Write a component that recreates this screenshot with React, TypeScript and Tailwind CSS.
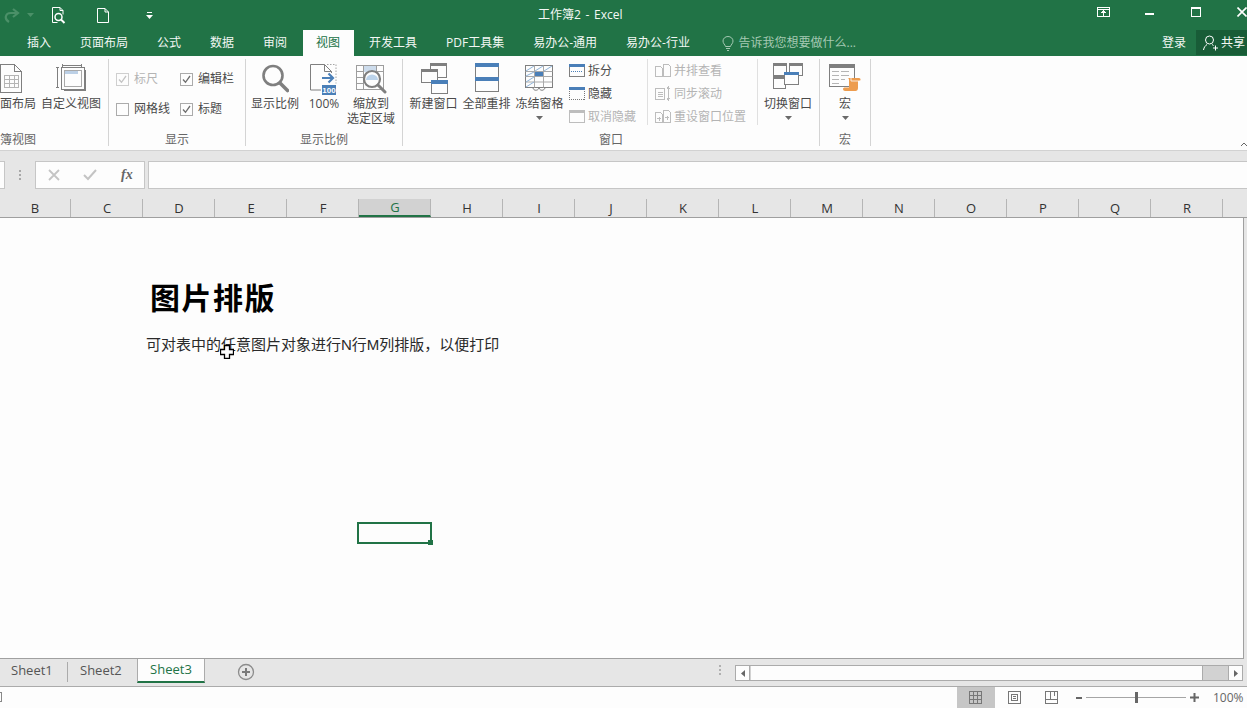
import React from "react";

const G = "#7f7f7f";
const B = "#4a7fb8";
const D = "#bdbdbd";

const Svg = ({ w, h, children, className = "" }: { w: number; h: number; children: React.ReactNode; className?: string }) => (
  <svg width={w} height={h} viewBox={`0 0 ${w} ${h}`} fill="none" className={className} shapeRendering="crispEdges">
    {children}
  </svg>
);

const Caret = () => (
  <svg width="7" height="4" viewBox="0 0 7 4" className="mt-[5px]"><path d="M0 0h7L3.5 4z" fill="#6a6a6a" /></svg>
);

const PageIcon = () => (
  <Svg w={24} h={30} className="-translate-x-[7px]">
    <path d="M1.5.5h14l7 7v21h-21z" fill="#fdfdfd" stroke={G} />
    <path d="M15.5.5v7h7" stroke={G} />
    <path d="M5 11.5h14M5 15.5h14M5 19.5h14M5 23.5h14M5 11v13M10 11v13M15 11v13M19 11v13" stroke="#b5b5b5" />
  </Svg>
);
const CustomViewIcon = () => (
  <Svg w={30} h={28}>
    <path d="M1.5 3v20M0 3h3M0 23h3M6 1.5h19M6 0v3M25 0v3" stroke={G} />
    <rect x="5.5" y="3.5" width="23" height="22" stroke={G} />
    <path d="M8 26.5h21V6" stroke={G} />
    <rect x="8.5" y="6.5" width="17" height="16" stroke="#a9a9a9" fill="#fdfdfd" />
    <rect x="9" y="7" width="13" height="3" fill="#bcd0e6" />
  </Svg>
);
const MagIcon = () => (
  <svg width="28" height="29" viewBox="0 0 28 29" fill="none">
    <circle cx="12" cy="11.5" r="9.5" stroke={G} strokeWidth="2.6" />
    <path d="M19 19l7.500 7.500" stroke={G} strokeWidth="3.600" strokeLinecap="round" />
  </svg>
);
const Pct100Icon = () => (
  <svg width="28" height="32" viewBox="0 0 28 32" fill="none">
    <path d="M.5 26V.5h14l7 7V9" stroke={G} />
    <path d="M14.500.5v7h7M.5 26H11" stroke={G} />
    <path d="M17 .5h9v19" stroke="#a5a5a5" strokeDasharray="1.5 1.5" />
    <path d="M12 14h11M18.500 9.500l4.500 4.500-4.500 4.500" stroke={B} strokeWidth="2.200" />
    <rect x="12" y="21" width="14" height="10" fill={B} />
    <text x="19" y="29" textAnchor="middle" fontSize="8" fontWeight="700" fill="#fff" fontFamily="Liberation Sans">100</text>
  </svg>
);
const ZoomSelIcon = () => (
  <svg width="31" height="29" viewBox="0 0 31 29" fill="none">
    <path d="M.5.500h27v24H.5zM.5 6.500h27M.5 12.500h8M.5 18.500h6M7.500.5v24M20.500.5v6" stroke="#9d9d9d" shapeRendering="crispEdges" />
    <rect x="8" y="1" width="12" height="6" fill="#cddcec" />
    <circle cx="16" cy="14" r="8" fill="#fdfdfd" stroke={G} strokeWidth="2.200" />
    <path d="M10 15a6 5.500 0 0 1 12 0z" fill="#bcd3ea" />
    <path d="M22 20l7 7" stroke={G} strokeWidth="3" strokeLinecap="round" />
  </svg>
);
const NewWinIcon = () => (
  <Svg w={28} h={31}>
    <rect x="10.5" y=".5" width="16" height="14" fill="#fdfdfd" stroke={G} />
    <rect x="10" y="0" width="17" height="3" fill={G} />
    <rect x="1.5" y="6.5" width="16" height="13" fill="#fdfdfd" stroke={G} />
    <rect x="1" y="6" width="17" height="3" fill={G} />
    <rect x="11.5" y="17.5" width="16" height="13" fill="#fdfdfd" stroke={G} />
    <rect x="11" y="17" width="17" height="4" fill={B} />
  </Svg>
);
const ArrangeIcon = () => (
  <Svg w={24} h={29}>
    <rect x=".5" y=".5" width="23" height="28" stroke={G} fill="#fdfdfd" />
    <rect x="0" y="0" width="24" height="4" fill={B} />
    <rect x="0" y="14" width="24" height="4" fill={B} />
  </Svg>
);
const FreezeIcon = () => (
  <svg width="29" height="26" viewBox="0 0 29 26" fill="none">
    <rect x=".5" y=".5" width="27" height="22" stroke={G} fill="#fdfdfd" />
    <path d="M.5 6.500h27M.5 11.500h27M.5 17h27M9.500.5v22M18.500.5v22" stroke="#a9a9a9" />
    <path d="M1 6l8-5M1 11l8-4M1 17l8-5M1 22l8-5M10 6l8-5M19 6l8-5" stroke="#8fb4d9" />
    <rect x="10" y="7" width="8" height="4" fill={B} />
    <path d="M8 23c.5 3 5 3 6 0M14 23c1 3 5 3 6 0" stroke={G} />
  </svg>
);
const SplitIcon = () => (
  <Svg w={16} h={13}>
    <rect x=".5" y=".5" width="15" height="12" stroke={G} fill="#fdfdfd" />
    <rect x="0" y="0" width="16" height="3" fill={B} />
    <path d="M2 7.500h12" stroke={B} strokeDasharray="1 1" />
  </Svg>
);
const HideIcon = () => (
  <Svg w={16} h={13}>
    <rect x=".5" y=".5" width="15" height="12" stroke="#777" strokeDasharray="1 1" fill="#fdfdfd" />
    <rect x="0" y="0" width="16" height="3" fill={B} />
  </Svg>
);
const UnhideIcon = () => (
  <Svg w={16} h={13}>
    <rect x=".5" y=".5" width="15" height="12" stroke={D} fill="#fdfdfd" />
    <rect x="0" y="0" width="16" height="3" fill={D} />
  </Svg>
);
const SideIcon = () => (
  <Svg w={16} h={13}>
    <path d="M.5 2.500h5l2 2v8h-7zM8.500.5h5l2 2v10h-7z" stroke={D} fill="#fdfdfd" />
  </Svg>
);
const SyncIcon = () => (
  <Svg w={16} h={15}>
    <path d="M.5 2.500h9v11h-9z" stroke={D} fill="#fdfdfd" />
    <path d="M2.500 6.500h5M2.500 8.500h5M2.500 10.500h5M13.500 1v13M12 3l1.500-2L15 3M12 12l1.500 2 1.500-2" stroke={D} />
  </Svg>
);
const ResetIcon = () => (
  <Svg w={16} h={13}>
    <path d="M.5 2.500h5l2 2v8h-7zM8.500.5h5l2 2v10h-7z" stroke={D} fill="#fdfdfd" />
    <path d="M2 8.500h4M4 6.500v4M10 7.500h4M12 5.500v4" stroke={D} />
  </Svg>
);
const SwitchIcon = () => (
  <Svg w={30} h={26}>
    <rect x=".5" y=".5" width="13" height="12" stroke={G} fill="#fdfdfd" />
    <rect x="0" y="0" width="14" height="3" fill={G} />
    <rect x="16.5" y=".5" width="13" height="12" stroke={G} fill="#fdfdfd" />
    <rect x="16" y="0" width="14" height="3" fill={G} />
    <rect x=".5" y="13.5" width="12" height="12" stroke={G} fill="#fdfdfd" />
    <rect x="0" y="13" width="13" height="3" fill={G} />
    <rect x="11.5" y="9.5" width="14" height="12" stroke={G} fill="#fdfdfd" />
    <rect x="11" y="9" width="15" height="3" fill={B} />
  </Svg>
);
const MacroIcon = () => (
  <svg width="32" height="28" viewBox="0 0 32 28" fill="none">
    <rect x=".5" y=".5" width="25" height="22" stroke={G} fill="#fdfdfd" shapeRendering="crispEdges" />
    <rect x="0" y="0" width="26" height="4" fill={G} />
    <path d="M3 7.500h7M12 7.500h8M3 11.500h7M12 11.500h8M3 15.500h7M12 15.500h4M3 19.500h7" stroke="#b5b5b5" shapeRendering="crispEdges" />
    <path d="M19 14h11c1 0 1.500.8 1.500 1.500S31 17 30 17h-1v7c0 2-1 3-2.500 3H16c-1 0-2-1-2-2s1-1.500 2-1.500h4V16c0-1-.5-2-1-2z" fill="#ed9c4e" />
    <path d="M22 14v3h9" stroke="#fdfdfd" strokeWidth=".8" />
  </svg>
);

const Large = ({ w, lines, icon, caret, top = 5 }: { w: string; lines: string[]; icon: React.ReactNode; caret?: boolean; top?: number }) => (
  <div className={`${w} shrink-0 flex flex-col items-center`}>
    <div className="h-[37px] flex items-start justify-center" style={{ paddingTop: top }}>{icon}</div>
    {lines.map((l) => (
      <div key={l} className="leading-[15px] whitespace-nowrap">{l}</div>
    ))}
    {caret && <Caret />}
  </div>
);

const Small = ({ icon, label, off }: { icon: React.ReactNode; label: string; off?: boolean }) => (
  <div className={`h-[23px] flex items-center gap-[3px] whitespace-nowrap ${off ? "text-[#b4b4b4]" : ""}`}>
    <div className="w-[16px] flex justify-center">{icon}</div>
    <span>{label}</span>
  </div>
);

const Check = ({ label, checked, off }: { label: string; checked?: boolean; off?: boolean }) => (
  <div className={`h-[30px] flex items-center gap-[5px] ${off ? "text-[#b4b4b4]" : ""}`}>
    <div className={`w-[13px] h-[13px] border flex items-center justify-center bg-[#fdfdfd] ${off ? "border-[#cfcfcf]" : "border-[#ababab]"}`}>
      {checked && (
        <svg width="9" height="9" viewBox="0 0 9 9" fill="none">
          <path d="M1 4.500l2.500 2.800L8 1" stroke={off ? "#c4c4c4" : "#6d6d6d"} strokeWidth="1.300" />
        </svg>
      )}
    </div>
    <span>{label}</span>
  </div>
);

const Group = ({ w, label, children, start }: { w: string; label: string; children: React.ReactNode; start?: boolean }) => (
  <div className={`${w} h-[87px] shrink-0 border-r border-[#d4d4d4] flex flex-col`}>
    <div className="h-[71px] flex">{children}</div>
    <div className={`h-[16px] leading-[20px] whitespace-nowrap text-[#666] ${start ? "text-left" : "text-center"}`}>{label}</div>
  </div>
);

const Tab = ({ children, active }: { children: string; active?: boolean }) => (
  <div className={`h-[26px] px-[14.5px] flex items-center whitespace-nowrap ${active ? "!px-[13.5px] mx-[1px] bg-[#fdfdfd] text-[#217346]" : "text-[#f2f7f4]"}`}>
    {children}
  </div>
);

const cols = "BCDEFGHIJKLMNOPQR".split("");

export default function App() {
  return (
    <div className="w-[1247px] h-[708px] overflow-hidden bg-[#e6e6e6] text-[12px] text-[#4a4a4a] font-['Open_Sans','Noto_Sans_CJK_SC',sans-serif] flex flex-col">
      {/* title bar */}
      <div className="h-[30px] bg-[#217346] flex items-center relative shrink-0">
        <div className="w-[538px] flex items-center shrink-0">
          <svg width="16" height="15" viewBox="0 0 16 15" fill="none" className="ml-[4px]">
            <path d="M5 14C0 11 1 5 7 5h6" stroke="#4b9068" strokeWidth="2.200" />
            <path d="M9 1l5 4-5 4" stroke="#4b9068" strokeWidth="2.200" />
          </svg>
          <svg width="7" height="4" viewBox="0 0 7 4" className="ml-[7px]"><path d="M0 0h7L3.500 4z" fill="#4b9068" /></svg>
          <svg width="15" height="17" viewBox="0 0 15 17" fill="none" className="ml-[17px]">
            <path d="M9 .5H1.500v15h5M9 .5l3 3v4M9 .5v3h3" stroke="#fff" />
            <circle cx="7.500" cy="10" r="3.500" stroke="#fff" strokeWidth="1.500" />
            <path d="M10 12.500l3.500 3.500" stroke="#fff" strokeWidth="2" />
          </svg>
          <svg width="12" height="15" viewBox="0 0 12 15" fill="none" className="ml-[31px]">
            <path d="M.5.500h7.500l3.500 3.500v10.500H.5zM8 .5V4h3.500" stroke="#fff" />
          </svg>
          <svg width="7" height="7" viewBox="0 0 7 7" className="ml-[37px]">
            <path d="M1 0h5v1H1zM0 3h7L3.500 7z" fill="#fff" />
          </svg>
        </div>
        <span className="text-[#f4f8f5] whitespace-nowrap [word-spacing:1.500px]">工作簿2 - Excel</span>
        <div className="absolute left-[1097px] top-[7px]">
          <svg width="13" height="10" viewBox="0 0 13 10" fill="none" shapeRendering="crispEdges">
            <path d="M.5.500h12v9H.5zM.5 2h12" stroke="#fff" />
            <path d="M6.500 9V4M4.500 6l2-2 2 2" stroke="#fff" />
          </svg>
        </div>
        <div className="absolute left-[1145px] top-[13px] w-[9px] h-[2px] bg-white" />
        <div className="absolute left-[1191px] top-[7px] w-[10px] h-[10px] border border-white border-t-2" />
        <svg width="10" height="10" viewBox="0 0 10 10" className="absolute left-[1237px] top-[7px]" fill="none">
          <path d="M.5.500l9 9M9.500.500l-9 9" stroke="#fff" strokeWidth="1.600" />
        </svg>
      </div>
      {/* tabs */}
      <div className="h-[26px] bg-[#217346] flex items-center pl-[12.5px] relative shrink-0">
        <Tab>插入</Tab>
        <Tab>页面布局</Tab>
        <Tab>公式</Tab>
        <Tab>数据</Tab>
        <Tab>审阅</Tab>
        <Tab active>视图</Tab>
        <Tab>开发工具</Tab>
        <Tab>PDF工具集</Tab>
        <Tab>易办公-通用</Tab>
        <Tab>易办公-行业</Tab>
        <div className="flex items-center gap-[4px] ml-[18px] text-[#a5c9b3] whitespace-nowrap">
          <svg width="12" height="15" viewBox="0 0 12 15" fill="none">
            <path d="M3.500 10.500C3 8.500 1 7.500 1 5a5 4.500 0 0 1 10 0c0 2.500-2 3.500-2.500 5.500zM4 12.500h4M5 14.500h2" stroke="#a5c9b3" />
          </svg>
          <span>告诉我您想要做什么...</span>
        </div>
        <span className="ml-auto text-[#f4f8f5] whitespace-nowrap">登录</span>
        <div className="ml-[10px] w-[51px] h-[25px] bg-[#185c37] flex items-center pl-[7px] gap-[3px] text-[#f4f8f5] whitespace-nowrap overflow-hidden shrink-0 self-start">
          <svg width="15" height="16" viewBox="0 0 15 16" fill="none" className="shrink-0">
            <circle cx="6.500" cy="5" r="4" stroke="#fff" />
            <path d="M.5 15c.5-3 2-4.500 3.500-5.500M9 9.500c.5.300 1 .6 1.500 1M10 13h5M12.500 10.500v5" stroke="#fff" />
          </svg>
          <span>共享</span>
        </div>
      </div>
      {/* ribbon */}
      <div className="h-[95px] bg-[#fdfdfd] border-b border-[#d2d2d2] pt-[3px] flex relative shrink-0">
        <Group w="w-[109px]" label="簿视图" start>
          <Large w="w-[36px]" lines={["面布局"]} icon={<PageIcon />} />
          <Large w="w-[64px] ml-[3px]" lines={["自定义视图"]} icon={<CustomViewIcon />} />
        </Group>
        <Group w="w-[137px]" label="显示">
          <div className="pl-[7px] pt-[5px] grid grid-cols-[64px_64px] grid-rows-[30px_30px] content-start">
            <Check label="标尺" checked off />
            <Check label="编辑栏" checked />
            <Check label="网格线" />
            <Check label="标题" checked />
          </div>
        </Group>
        <Group w="w-[157px]" label="显示比例">
          <Large w="w-[58px]" lines={["显示比例"]} icon={<MagIcon />} />
          <Large w="w-[40px]" lines={["100%"]} icon={<Pct100Icon />} />
          <Large w="w-[54px]" lines={["缩放到", "选定区域"]} icon={<ZoomSelIcon />} top={6} />
        </Group>
        <Group w="w-[417px]" label="窗口">
          <div className="flex pl-[4px]">
            <Large w="w-[53px]" lines={["新建窗口"]} icon={<NewWinIcon />} top={4} />
            <Large w="w-[53px]" lines={["全部重排"]} icon={<ArrangeIcon />} top={4} />
            <Large w="w-[53px]" lines={["冻结窗格"]} icon={<FreezeIcon />} top={6} caret />
            <div className="w-[79px] ml-[3px] border-r border-[#e0e0e0] h-[66px] shrink-0">
              <Small icon={<SplitIcon />} label="拆分" />
              <Small icon={<HideIcon />} label="隐藏" />
              <Small icon={<UnhideIcon />} label="取消隐藏" off />
            </div>
            <div className="w-[110px] pl-[7px] border-r border-[#e0e0e0] h-[66px] shrink-0">
              <Small icon={<SideIcon />} label="并排查看" off />
              <Small icon={<SyncIcon />} label="同步滚动" off />
              <Small icon={<ResetIcon />} label="重设窗口位置" off />
            </div>
            <div className="ml-[1px]">
              <Large w="w-[58px]" lines={["切换窗口"]} icon={<SwitchIcon />} top={4} caret />
            </div>
          </div>
        </Group>
        <Group w="w-[51px]" label="宏">
          <Large w="w-[50px]" lines={["宏"]} icon={<MacroIcon />} caret />
        </Group>
        <svg width="6" height="4" viewBox="0 0 6 4" className="absolute right-0 bottom-[4px]"><path d="M0 4l3-3 3 3" stroke="#666" fill="none" /></svg>
      </div>
      {/* formula bar */}
      <div className="h-[28px] mt-[10px] flex shrink-0">
        <div className="w-[5px] border border-l-0 border-[#c6c6c6] bg-[#fdfdfd] shrink-0" />
        <div className="w-[30px] flex flex-col items-center justify-center gap-[2px] shrink-0">
          <div className="w-[2px] h-[2px] bg-[#a8a8a8]" />
          <div className="w-[2px] h-[2px] bg-[#a8a8a8]" />
          <div className="w-[2px] h-[2px] bg-[#a8a8a8]" />
        </div>
        <div className="w-[110px] border border-[#c6c6c6] bg-[#fdfdfd] flex items-center shrink-0">
          <svg width="12" height="12" viewBox="0 0 12 12" className="ml-[12px]" fill="none"><path d="M1 1l10 10M11 1L1 11" stroke="#c4c4c4" strokeWidth="1.800" /></svg>
          <svg width="14" height="12" viewBox="0 0 14 12" className="ml-[23px]" fill="none"><path d="M1 6l4 4 8-9" stroke="#c4c4c4" strokeWidth="2" /></svg>
          <span className="ml-[24px] italic font-bold text-[14px] text-[#666] font-['Liberation_Serif',serif] leading-none">fx</span>
        </div>
        <div className="flex-1 ml-[3px] border-y border-l border-[#c6c6c6] bg-[#fdfdfd]" />
      </div>
      {/* column headers */}
      <div className="h-[19px] mt-[10px] flex -ml-[1px] border-b border-[#9f9f9f] shrink-0 text-[#333] text-[13px]">
        {cols.map((c) => (
          <div
            key={c}
            className={`w-[72px] shrink-0 pt-[2px] pl-[1px] flex items-center justify-center border-r border-[#b5b5b5] ${c === "G" ? "bg-[#d2d2d2] border-b-2 border-b-[#217346] text-[#217346]" : ""}`}
          >
            {c}
          </div>
        ))}
      </div>
      {/* sheet */}
      <div className="h-[441px] relative flex shrink-0">
        <div className="w-[1244px] bg-[#fdfdfd] border-r border-b border-[#a0a0a0] pt-[58px] pl-[146px] text-[#2a2a2a] shrink-0">
          <div className="pl-[4px] text-[30px] leading-[40px] font-bold text-black tracking-[1.500px] font-['Noto_Sans_CJK_SC',sans-serif]">图片排版</div>
          <div className="mt-[19px] text-[15px] leading-[20px] whitespace-nowrap font-['Liberation_Sans','Noto_Sans_CJK_SC',sans-serif]">可对表中的任意图片对象进行N行M列排版，以便打印</div>
        </div>
        <div className="absolute left-[357px] top-[304px] w-[75px] h-[22px] border-2 border-[#217346]">
          <div className="absolute -right-[3px] -bottom-[3px] w-[5px] h-[5px] bg-[#217346]" />
        </div>
        <svg width="14" height="14" viewBox="0 0 14 14" className="absolute left-[220px] top-[127px]">
          <path d="M4.500.5h5v4h4v5h-4v4h-5v-4h-4v-5h4z" fill="#fff" stroke="#000" strokeWidth="1.300" />
        </svg>
      </div>
      {/* sheet tabs */}
      <div className="h-[28px] flex border-b border-[#ababab] shrink-0 text-[13px]">
        <div className="w-[68px] h-[24px] flex items-center pl-[11px] text-[#555] shrink-0 relative">
          Sheet1
          <div className="absolute right-0 top-[3px] h-[20px] w-px bg-[#ababab]" />
        </div>
        <div className="w-[69px] h-[24px] flex items-center pl-[12px] text-[#555] shrink-0">Sheet2</div>
        <div className="w-[68px] h-[25px] -mt-[1px] bg-[#fdfdfd] border-x border-t border-[#ababab] border-b-2 border-b-[#217346] flex items-center justify-center text-[#217346] shrink-0">Sheet3</div>
        <svg width="18" height="18" viewBox="0 0 18 18" fill="none" className="ml-[32px] mt-[4px] shrink-0">
          <circle cx="9" cy="9" r="7.500" stroke="#8c8c8c" strokeWidth="1.300" />
          <path d="M5 9h8M9 5v8" stroke="#7a7a7a" strokeWidth="2" />
        </svg>
        <div className="ml-[464px] mt-[6px] w-[2px] flex flex-col gap-[2px] shrink-0">
          <div className="h-[2px] bg-[#b0b0b0]" />
          <div className="h-[2px] bg-[#b0b0b0]" />
          <div className="h-[2px] bg-[#b0b0b0]" />
        </div>
        <div className="ml-[14px] mt-[6px] w-[508px] h-[16px] border border-[#ababab] flex bg-[#d2d2d2] shrink-0">
          <div className="w-[14px] bg-[#fdfdfd] border-r border-[#ababab] flex items-center justify-center">
            <svg width="4" height="7" viewBox="0 0 4 7"><path d="M4 0v7L0 3.500z" fill="#666" /></svg>
          </div>
          <div className="w-[452px] bg-[#fdfdfd] border-r border-[#ababab] ml-px" />
          <div className="flex-1" />
          <div className="w-[14px] bg-[#fdfdfd] border-l border-[#ababab] flex items-center justify-center">
            <svg width="4" height="7" viewBox="0 0 4 7"><path d="M0 0v7l4-3.500z" fill="#666" /></svg>
          </div>
        </div>
      </div>
      {/* status bar */}
      <div className="flex-1 bg-[#fdfdfd] flex items-center text-[#666] relative">
        <div className="absolute -left-[6px] top-[5px] w-[8px] h-[10px] border border-[#888]" />
        <div className="ml-[957px] w-[38px] h-full bg-[#c6c6c6] flex items-center justify-center pr-[1px] shrink-0">
          <Svg w={13} h={13}>
            <path d="M.5.500h12v12H.5zM.5 4.500h12M.5 8.500h12M4.500.5v12M8.500.5v12" stroke="#777" />
          </Svg>
        </div>
        <div className="w-[38px] flex justify-center shrink-0">
          <Svg w={13} h={13}>
            <path d="M.5.500h12v12H.5z" stroke="#777" />
            <path d="M3.500 3.500h6v6h-6zM5 5.500h3M5 7.500h3" stroke="#777" />
          </Svg>
        </div>
        <div className="w-[37px] flex justify-center shrink-0">
          <Svg w={13} h={13}>
            <path d="M.5.500h12v12H.5zM.5 8.500h12M5.500.5v8M9.500.5v4" stroke="#777" />
          </Svg>
        </div>
        <div className="ml-[6px] w-[6px] h-[2px] bg-[#666] shrink-0" />
        <div className="ml-[4px] w-[100px] h-px bg-[#a5a5a5] relative shrink-0">
          <div className="absolute left-[49px] -top-[5px] w-[3px] h-[11px] bg-[#666]" />
        </div>
        <svg width="9" height="9" viewBox="0 0 9 9" className="ml-[4px] shrink-0"><path d="M0 3.500h9v2H0zM3.500 0h2v9h-2z" fill="#666" /></svg>
        <span className="ml-[14px] whitespace-nowrap">100%</span>
      </div>
    </div>
  );
}
